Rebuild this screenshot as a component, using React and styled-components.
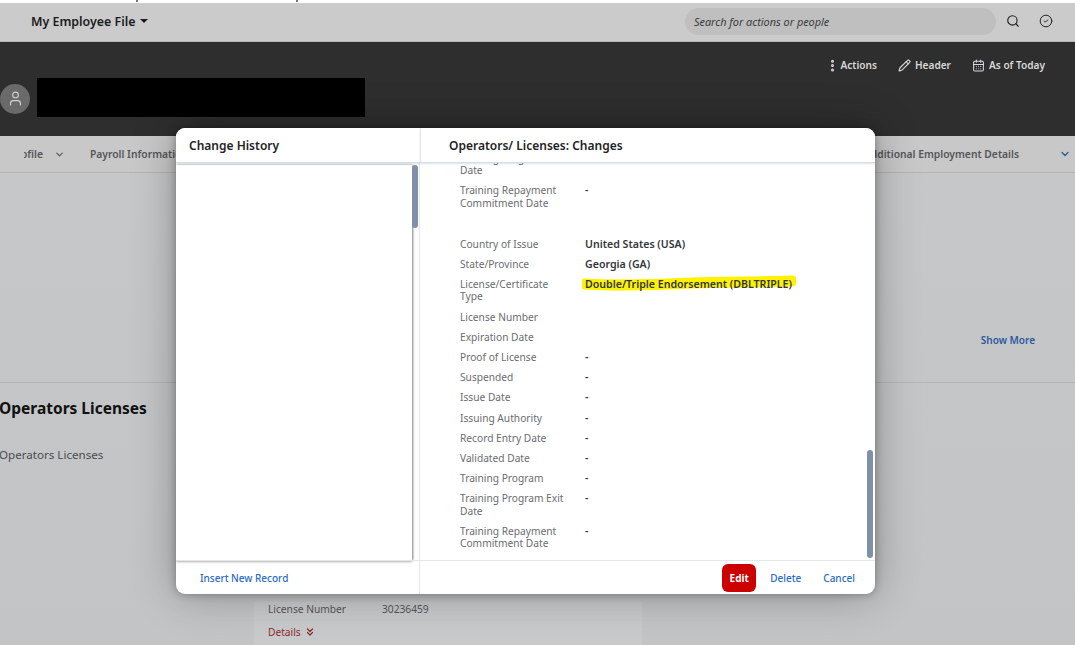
import React from "react";
import styled, { createGlobalStyle } from "styled-components";
import { Search, CircleCheck, Pencil, CalendarDays, User, ChevronDown, ChevronsDown, EllipsisVertical } from "lucide-react";

const Global = createGlobalStyle`
  html, body { margin: 0; padding: 0; background: #fff; }
  body { font-family: "Noto Sans", "Liberation Sans", sans-serif; color: #2b2c2e; overflow: hidden; }
  #root { width: 1075px; height: 645px; }
`;
const Page = styled.div`
  position: relative;
  width: 1075px;
  height: 645px;
  overflow: hidden;
  display: flex;
  flex-direction: column;
`;
const TopStrip = styled.div`
  height: 3px;
  background: #fff;
  flex: none;
  display: flex;
  gap: 158px;
  padding-left: 136px;
`;
const TopMark = styled.span`
  width: 2px;
  height: 2px;
  background: #77787a;
`;
const ShellBar = styled.header`
  box-sizing: content-box;
  flex: none;
  background: #cbcbcb;
  border-bottom: 1px solid #b5b5b5;
  display: flex;
  align-items: center;
  padding: 0 22px 2px 31px;
  height: 36px;
`;
const AppTitle = styled.div`
  font-size: 12.4px;
  font-weight: 600;
  color: #1b1c1e;
  display: flex;
  align-items: center;
  gap: 5px;
`;
const Caret = styled.span`
  width: 0;
  height: 0;
  border-left: 4px solid transparent;
  border-right: 4px solid transparent;
  border-top: 4px solid #1b1c1e;
`;
const SearchBox = styled.div`
  margin-left: auto;
  width: 311px;
  height: 27px;
  box-sizing: border-box;
  border-radius: 14px;
  background: #bfbfbf;
  padding-left: 9px;
  display: flex;
  align-items: center;
  font-size: 10.9px;
  font-style: italic;
  color: #3a3b3d;
`;
const ShellIcons = styled.div`
  display: flex;
  align-items: center;
  gap: 19px;
  margin-left: 10px;
  color: #1b1c1e;
`;
const ProfileBand = styled.section`
  height: 94px;
  flex: none;
  background: #2e2e2e;
  display: flex;
  flex-direction: column;
`;
const ActionBar = styled.div`
  display: flex;
  justify-content: flex-end;
  align-items: center;
  gap: 21px;
  height: 46px;
  padding-right: 30px;
`;
const ActionItem = styled.div`
  display: flex;
  align-items: center;
  gap: ${(p) => p.$gap || 4}px;
  font-size: 10.1px;
  font-weight: 600;
  color: #d8d8d8;
`;
const Identity = styled.div`
  display: flex;
  align-items: center;
  gap: 7px;
  margin-top: -10px;
`;
const Avatar = styled.div`
  width: 30px;
  height: 30px;
  margin-top: 2px;
  border-radius: 50%;
  background: #6a6a6a;
  color: #d2d2d2;
  display: flex;
  align-items: center;
  justify-content: center;
`;
const Redaction = styled.div`
  width: 328px;
  height: 39px;
  background: #000;
`;
const NavBar = styled.nav`
  height: 36px;
  flex: none;
  background: #c8c8c8;
  border-bottom: 1px solid #b4b4b4;
  display: flex;
  align-items: center;
  font-size: 10.3px;
  font-weight: 600;
  color: #55565a;
  padding-left: 24px;
  padding-right: 4px;
`;
const NavItem = styled.span`
  white-space: nowrap;
  display: flex;
  align-items: center;
  gap: 11px;
`;
const ClippedTab = styled.span`
  width: 19px;
  overflow: hidden;
  display: flex;
  justify-content: flex-end;
`;
const NavLeft = styled.div`
  display: flex;
  align-items: center;
  gap: 25px;
`;
const NavRight = styled.div`
  margin-left: auto;
  display: flex;
  align-items: center;
  gap: 40px;
  color: #55565a;
`;
const Body = styled.main`
  flex: 1;
  background: linear-gradient(#c6c7c8, #c2c4c5);
  display: flex;
  flex-direction: column;
`;
const UpperSection = styled.div`
  height: 210px;
  flex: none;
  box-sizing: border-box;
  border-bottom: 1px solid #b3b4b5;
  display: flex;
  justify-content: flex-end;
  align-items: flex-end;
  padding: 0 40px 35px 0;
`;
const ShowMore = styled.span`
  font-size: 10px;
  font-weight: 600;
  color: #2c5a9e;
`;
const SectionTitle = styled.h2`
  margin: 15px 0 0 -1px;
  font-size: 15.5px;
  line-height: 20px;
  font-weight: 700;
  color: #111;
`;
const SectionSub = styled.div`
  margin: 29px 0 0 -1px;
  font-size: 11.6px;
  line-height: 16px;
  color: #4b4c4e;
`;
const RecordCard = styled.div`
  margin: 138px 0 0 254px;
  width: 388px;
  box-sizing: border-box;
  flex: 1;
  background: #c9cacb;
  padding-left: 14px;
  font-size: 10.2px;
`;
const RecordLine = styled.div`
  display: flex;
  height: 15px;
  align-items: center;
  color: #55565a;
  margin-top: ${(p) => p.$top || 0}px;
`;
const RecordKey = styled.span`
  width: 114px;
`;
const RecordLink = styled.span`
  color: #8e2a2e;
  display: flex;
  align-items: center;
  gap: 3px;
`;
const Modal = styled.div`
  position: absolute;
  left: 176px;
  top: 128px;
  width: 699px;
  height: 466px;
  background: #fff;
  border-radius: 9px;
  box-shadow: 0 0 8px rgba(0, 0, 0, 0.3), 0 0 44px rgba(0, 0, 0, 0.3);
  overflow: hidden;
  display: grid;
  grid-template-columns: 244px 1fr;
  grid-template-rows: 35px 1fr 34px;
`;
const HeadCell = styled.div`
  display: flex;
  align-items: center;
  font-size: 12px;
  font-weight: 600;
  color: #222326;
  padding-left: ${(p) => p.$pad}px;
  border-left: ${(p) => (p.$divide ? "1px solid #e4e6e8" : "none")};
  border-bottom: 1px solid #d5dde6;
  box-shadow: 0 1px 2px rgba(120, 140, 165, 0.25);
  background: #fff;
  z-index: 1;
`;
const ListPane = styled.div`
  display: flex;
  min-height: 0;
  padding-top: 2px;
  border-right: 1px solid #e4e6e8;
`;
const ListPanel = styled.div`
  width: 236px;
  height: 395px;
  background: #fff;
  box-shadow: 0 1px 3px rgba(0, 0, 0, 0.55), 1px 0 2px rgba(0, 0, 0, 0.25);
`;
const Thumb = styled.div`
  position: absolute;
  width: 6px;
  border-radius: 3px;
  background: #7f90a8;
  left: ${(p) => p.$left}px;
  top: ${(p) => p.$top}px;
  height: ${(p) => p.$h}px;
`;
const DetailPane = styled.div`
  overflow: hidden;
  padding-left: 40px;
  min-height: 0;
`;
const DetailScroll = styled.div`
  margin-top: -15px;
`;
const Row = styled.div`
  display: grid;
  grid-template-columns: 125px 1fr;
  padding: 4px 0;
  font-size: 10.2px;
  line-height: 12.2px;
  margin-top: ${(p) => p.$top || 0}px;
`;
const Label = styled.div`
  color: #6a6d70;
  width: 112px;
`;
const Value = styled.div`
  position: relative;
  font-weight: 600;
  font-size: 10.6px;
  color: #32363a;
  white-space: nowrap;
`;
const ValueText = styled.span`
  position: relative;
`;
const Marker = styled.svg`
  position: absolute;
  left: -3px;
  top: -4px;
  width: 214px;
  height: 18px;
`;
const FootLeft = styled.div`
  display: flex;
  align-items: center;
  padding-left: 24px;
  font-size: 10px;
  font-weight: 500;
  color: #2a6bc4;
  border-top: 1px solid #e4e6e8;
  border-right: 1px solid #e4e6e8;
`;
const FootRight = styled.div`
  display: flex;
  align-items: center;
  justify-content: flex-end;
  gap: 14px;
  padding-right: 20px;
  font-size: 10px;
  font-weight: 500;
  color: #2a6bc4;
  border-top: 1px solid #e4e6e8;
`;
const EditButton = styled.span`
  width: 34px;
  height: 28px;
  border-radius: 6px;
  background: #cc0000;
  color: #fff;
  font-weight: 700;
  display: flex;
  align-items: center;
  justify-content: center;
`;
const FootLink = styled.span`
  margin-left: ${(p) => p.$gap || 0}px;
`;

const block = [
  ["Training Program Exit Date", "-"],
  ["Training Repayment Commitment Date", "-"],
  ["Country of Issue", "United States (USA)", 21],
  ["State/Province", "Georgia (GA)"],
  ["License/Certificate Type", "Double/Triple Endorsement (DBLTRIPLE)", 0, true],
  ["License Number", ""],
  ["Expiration Date", ""],
  ["Proof of License", "-"],
  ["Suspended", "-"],
  ["Issue Date", "-"],
  ["Issuing Authority", "-"],
  ["Record Entry Date", "-"],
  ["Validated Date", "-"],
  ["Training Program", "-"],
  ["Training Program Exit Date", "-"],
  ["Training Repayment Commitment Date", "-"],
];

export default function App() {
  return (
    <Page>
      <Global />
      <TopStrip><TopMark /><TopMark /></TopStrip>
      <ShellBar>
        <AppTitle>My Employee File <Caret /></AppTitle>
        <SearchBox>Search for actions or people</SearchBox>
        <ShellIcons>
          <Search size={14} strokeWidth={1.9} />
          <CircleCheck size={14} strokeWidth={1.6} />
        </ShellIcons>
      </ShellBar>
      <ProfileBand>
        <ActionBar>
          <ActionItem $gap={1}><EllipsisVertical size={15} strokeWidth={2.8} />Actions</ActionItem>
          <ActionItem><Pencil size={13} strokeWidth={2.1} />Header</ActionItem>
          <ActionItem><CalendarDays size={13} strokeWidth={1.9} />As of Today</ActionItem>
        </ActionBar>
        <Identity>
          <Avatar><User size={17} strokeWidth={1.6} /></Avatar>
          <Redaction />
        </Identity>
      </ProfileBand>
      <NavBar>
        <NavLeft>
          <NavItem><ClippedTab>Profile</ClippedTab> <ChevronDown size={11} strokeWidth={2.5} /></NavItem>
          <NavItem>Payroll Information</NavItem>
        </NavLeft>
        <NavRight>
          <NavItem>Additional Employment Details</NavItem>
          <ChevronDown size={12} strokeWidth={2.6} color="#2c5a9e" />
        </NavRight>
      </NavBar>
      <Body>
        <UpperSection><ShowMore>Show More</ShowMore></UpperSection>
        <SectionTitle>Operators Licenses</SectionTitle>
        <SectionSub>Operators Licenses</SectionSub>
        <RecordCard>
          <RecordLine>
            <RecordKey>License Number</RecordKey>30236459
          </RecordLine>
          <RecordLine $top={8}>
            <RecordLink>Details <ChevronsDown size={12} strokeWidth={2.4} /></RecordLink>
          </RecordLine>
        </RecordCard>
      </Body>
      <Modal>
        <HeadCell $pad={13}>Change History</HeadCell>
        <HeadCell $pad={28} $divide>Operators/ Licenses: Changes</HeadCell>
        <ListPane><ListPanel /></ListPane>
        <DetailPane>
          <DetailScroll>
            {block.map(([l, v, top, mark], i) => (
              <Row key={i} $top={top}>
                <Label>{l}</Label>
                <Value>
                  {mark && (
                    <Marker viewBox="0 0 214 18">
                      <path d="M3 10 C40 12 70 11 110 9 C150 8 180 8 210 7" stroke="#fff200" strokeWidth="11" strokeLinecap="round" fill="none" />
                    </Marker>
                  )}
                  <ValueText>{v}</ValueText>
                </Value>
              </Row>
            ))}
          </DetailScroll>
        </DetailPane>
        <FootLeft>Insert New Record</FootLeft>
        <FootRight>
          <EditButton>Edit</EditButton>
          <FootLink>Delete</FootLink>
          <FootLink $gap={8}>Cancel</FootLink>
        </FootRight>
        <Thumb $left={236} $top={37} $h={63} />
        <Thumb $left={691} $top={322} $h={108} />
      </Modal>
    </Page>
  );
}
